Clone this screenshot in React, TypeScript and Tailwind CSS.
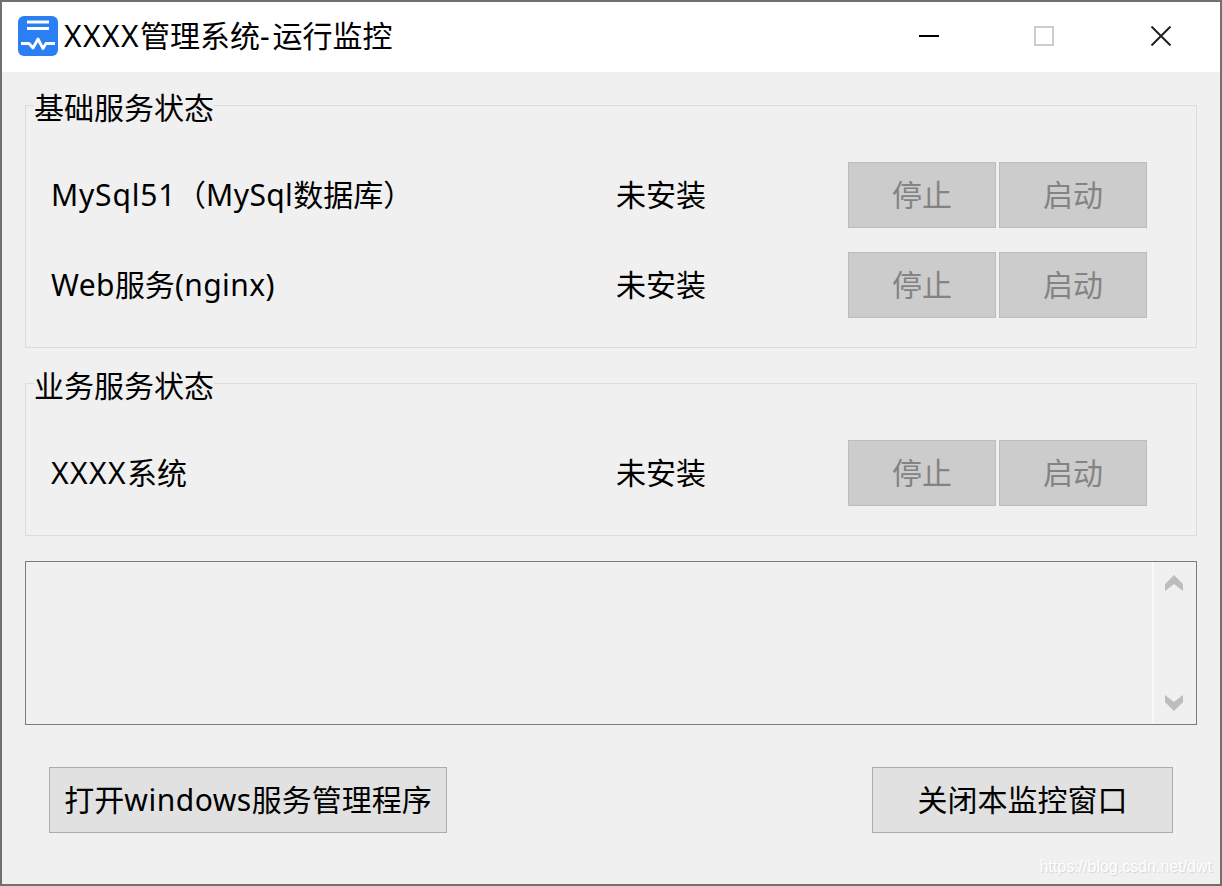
import type { ReactNode } from "react";

const FONT = { fontFamily: '"Noto Sans", "Noto Sans CJK SC", sans-serif' };

type Service = { id: string; name: ReactNode; status: string };

const BASE_SERVICES: Service[] = [
  {
    id: "mysql",
    name: (
      <>
        <span className="tracking-[0.8px]">MySql51</span>（<span className="tracking-[0.4px]">MySql</span>数据库）
      </>
    ),
    status: "未安装",
  },
  {
    id: "nginx",
    name: (
      <>
        <span className="tracking-[0.4px]">Web</span>服务<span className="tracking-[0.4px]">(nginx)</span>
      </>
    ),
    status: "未安装",
  },
];
const BIZ_SERVICES: Service[] = [
  {
    id: "xxxx",
    name: (
      <>
        <span className="tracking-[1.4px]">XXXX</span>系统
      </>
    ),
    status: "未安装",
  },
];

function DisabledButton({ label }: { label: string }) {
  return (
    <button
      disabled
      className="flex h-[66px] w-[148px] items-center justify-center border border-[#bcbcbc] bg-[#cccccc] text-[30px] leading-none text-[#838383]"
    >
      {label}
    </button>
  );
}

function ServiceRow({ service }: { service: Service }) {
  return (
    <div className="flex h-[66px] items-center">
      <div className="w-[565px] pb-[2px] whitespace-nowrap">{service.name}</div>
      <div className="w-[232px] pb-[2px]">{service.status}</div>
      <div className="flex gap-[3px]">
        <DisabledButton label="停止" />
        <DisabledButton label="启动" />
      </div>
    </div>
  );
}

function ServiceGroup({ title, services }: { title: string; services: Service[] }) {
  return (
    <section className="relative border border-[#dcdcdc] pt-[56px] pb-[29px] pl-[25px]">
      <div className="absolute -top-[16px] left-[8px] bg-[#f0f0f0] text-[30px] leading-[36px]">
        {title}
      </div>
      <div className="flex flex-col gap-[24px]">
        {services.map((s) => (
          <ServiceRow key={s.id} service={s} />
        ))}
      </div>
    </section>
  );
}

function Logo() {
  return (
    <svg width="40" height="40" viewBox="0 0 40 40" className="shrink-0">
      <rect width="40" height="40" rx="6" fill="#2b7ff5" />
      <path d="M9 6H31M9 12.5H31" stroke="#fff" strokeWidth="3" fill="none" />
      <path
        d="M3 27.5H11L15 32L20 23L25 32.5L28 27.5H37"
        stroke="#fff"
        strokeWidth="2.8"
        fill="none"
        strokeLinejoin="round"
      />
    </svg>
  );
}

export default function App() {
  return (
    <div
      style={FONT}
      className="relative flex h-[886px] w-[1222px] flex-col border-2 border-[#707070] bg-[#f0f0f0] text-[30px] text-black"
    >
      <header className="flex h-[70px] shrink-0 items-center bg-white pl-[16px]">
        <div className="-mt-[2px] flex items-center gap-[6px]">
          <Logo />
          <span className="leading-none">
            <span className="tracking-[1.4px]">XXXX</span>管理系统<span className="tracking-[3px]">-</span>运行监控
          </span>
        </div>
        <div className="ml-auto flex h-full pb-[2px]">
          <div className="flex w-[114px] items-center justify-center">
            <div className="h-[2px] w-[20px] bg-black" />
          </div>
          <div className="flex w-[116px] items-center justify-center">
            <div className="h-[20px] w-[20px] border-2 border-[#cccccc]" />
          </div>
          <div className="flex w-[118px] items-center justify-center">
            <svg width="20" height="20" viewBox="0 0 20 20">
              <path d="M0.5 0.5L19.5 19.5M19.5 0.5L0.5 19.5" stroke="#222" strokeWidth="2" fill="none" />
            </svg>
          </div>
        </div>
      </header>

      <main className="flex flex-col px-[23px] pt-[33px]">
        <ServiceGroup title="基础服务状态" services={BASE_SERVICES} />
        <div className="mt-[35px]">
          <ServiceGroup title="业务服务状态" services={BIZ_SERVICES} />
        </div>

        <div className="mt-[25px] flex h-[164px] justify-end border border-[#7a7a7a]">
          <div className="flex w-[44px] flex-col items-center justify-between border-l-2 border-[#f8f8f8] pt-[13px] pr-[2px] pb-[13px]">
            <svg width="18" height="16" viewBox="0 0 18 16">
              <path d="M9 0L18 9V16L9 9L0 16V9Z" fill="#bdbdbd" />
            </svg>
            <svg width="18" height="16" viewBox="0 0 18 16">
              <path d="M0 0L9 7L18 0V7L9 16L0 7Z" fill="#bdbdbd" />
            </svg>
          </div>
        </div>

        <div className="mt-[42px] flex justify-between px-[24px]">
          <button className="flex h-[66px] w-[398px] items-center justify-center whitespace-nowrap border border-[#adadad] bg-[#e1e1e1] leading-none">
            打开<span className="tracking-[0.5px]">windows</span>服务管理程序
          </button>
          <button className="flex h-[66px] w-[301px] items-center justify-center whitespace-nowrap border border-[#adadad] bg-[#e1e1e1] leading-none">
            关闭本监控窗口
          </button>
        </div>
      </main>

      <div
        style={{ fontFamily: '"Liberation Sans", sans-serif' }}
        className="absolute right-[8px] bottom-[7px] text-[16px] leading-[20px] text-white [text-shadow:1px_1px_1px_#d4d4d4]"
      >
        https://blog.csdn.net/dwt
      </div>
    </div>
  );
}
